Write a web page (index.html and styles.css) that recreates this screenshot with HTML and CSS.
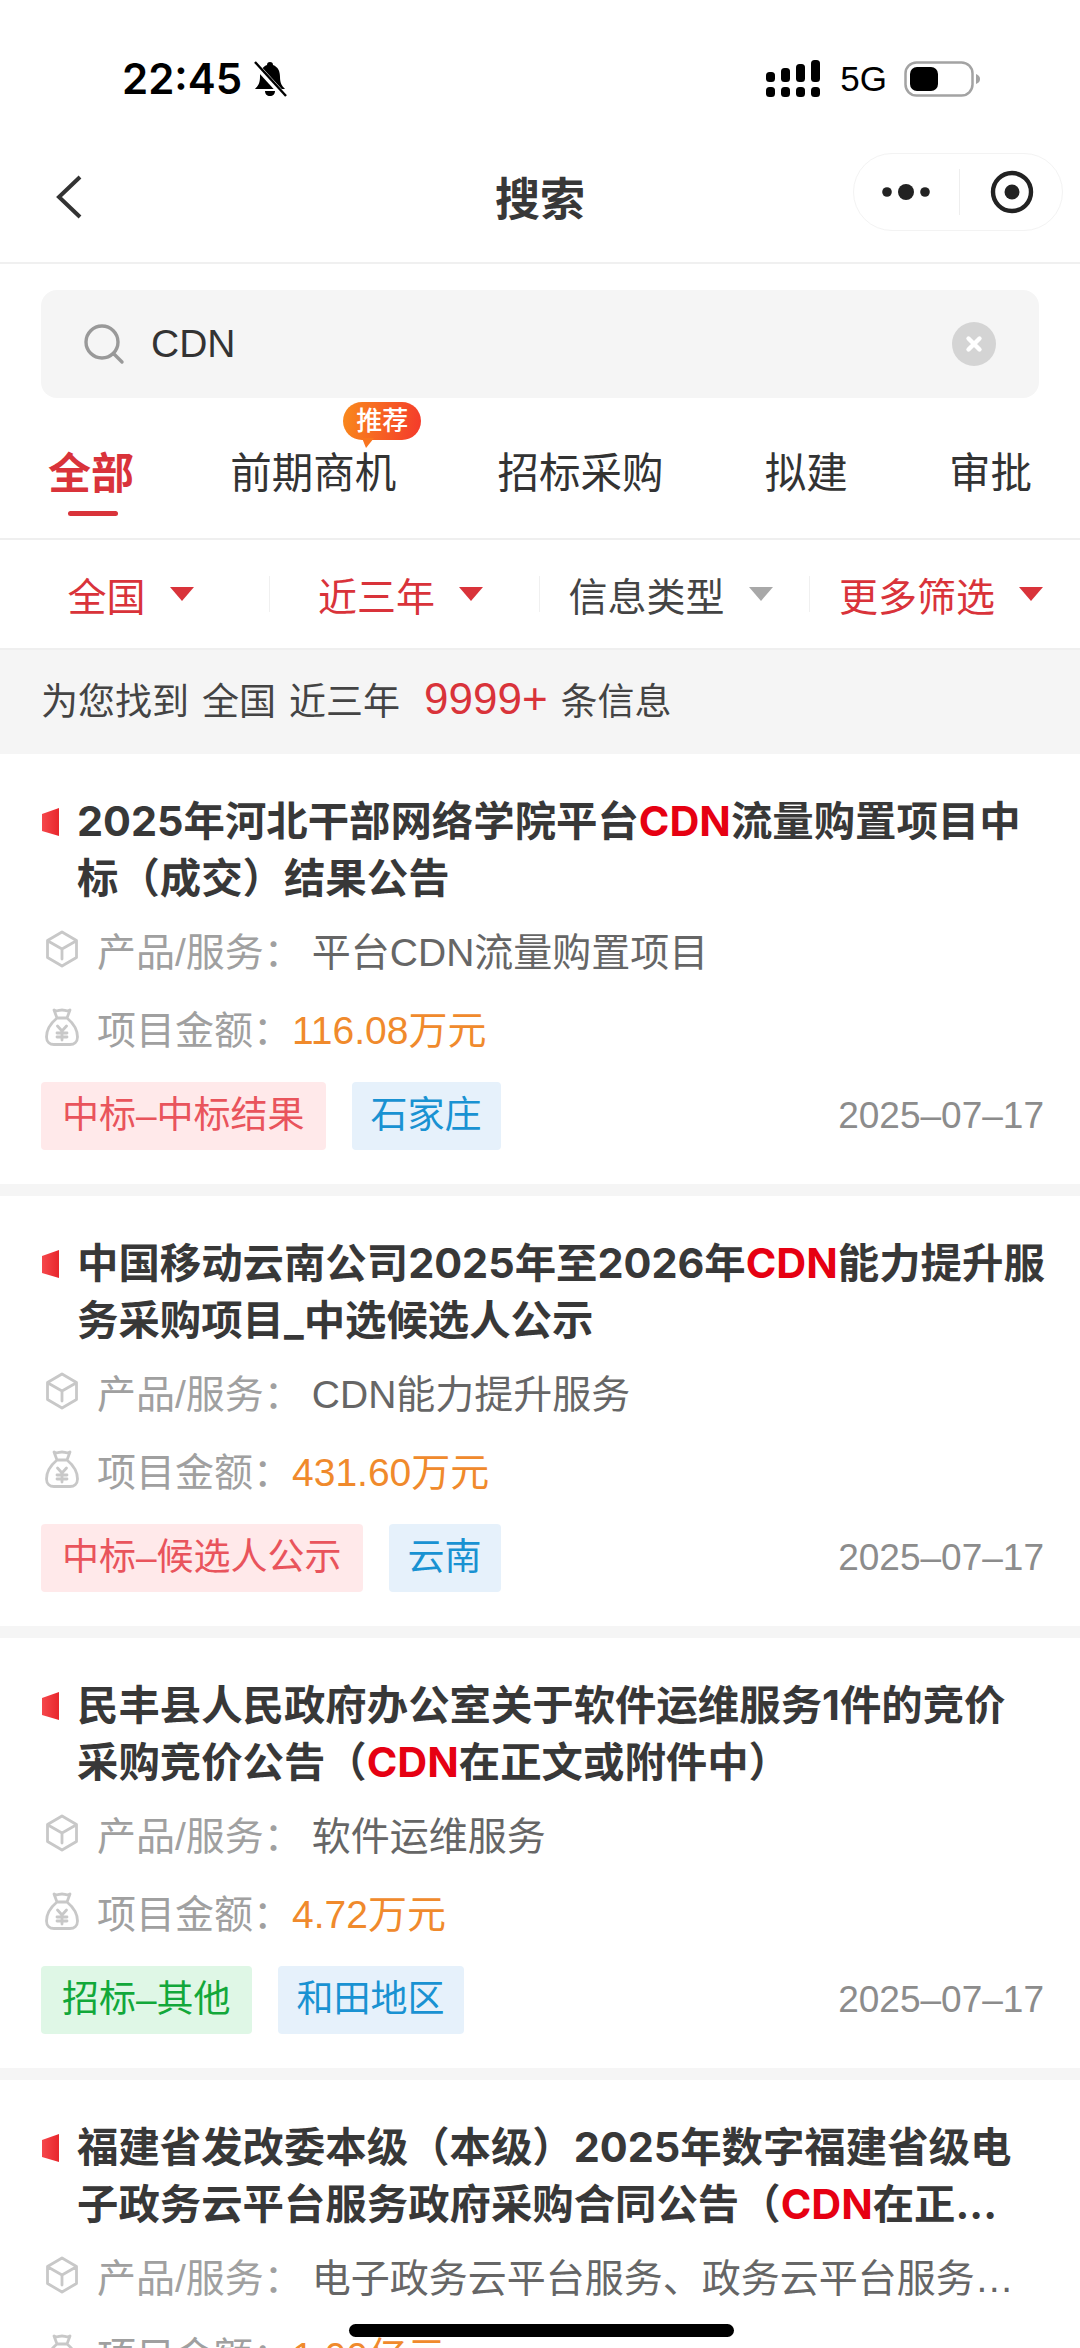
FILE: index.html
```html
<!DOCTYPE html>
<html lang="zh-CN">
<head>
  <meta charset="UTF-8" />
  <title>搜索</title>
  <link rel="stylesheet" href="styles.css">
</head>
<body>
  <svg class="defs" width="0" height="0">
    <defs>
      <linearGradient id="mark-fill" x1="0" y1="0" x2="1" y2="0">
        <stop offset="0" stop-color="#f5484c"/>
        <stop offset="1" stop-color="#e8262c"/>
      </linearGradient>
    </defs>
    <symbol id="icon-box" viewBox="0 0 34 38">
      <path d="M17 2 L31.5 10.5 V27.5 L17 36 L2.5 27.5 V10.5 Z M3 11 L17 19 L31 11 M17 19 V29" fill="none" stroke="#c8c8c8" stroke-width="2.8" stroke-linejoin="round" stroke-linecap="round"/>
    </symbol>
    <symbol id="icon-bag" viewBox="0 0 34 38">
      <path d="M9 2 C12 4 14 2 17 2 C20 2 22 4 25 2 L22 10 H12 Z M12 10 C6 15 1.5 22 1.5 29 C1.5 34 5 36.5 9 36.5 H25 C29 36.5 32.5 34 32.5 29 C32.5 22 28 15 22 10 M12.5 18 L17 23 L21.5 18 M17 23 V32 M12 25 H22 M12 29 H22" fill="none" stroke="#c8c8c8" stroke-width="2.8" stroke-linejoin="round" stroke-linecap="round"/>
    </symbol>
    <symbol id="icon-mark" viewBox="0 0 18 28">
      <path d="M18 0 V28 L1 23 V6 Z" fill="url(#mark-fill)"/>
    </symbol>
  </svg>

  <div class="page">
    <div class="statusbar">
      <div class="status-left">
        <span class="time">22:45</span>
        <svg class="bell-off" width="36" height="38" viewBox="0 0 36 38">
          <path d="M18 2 C20 2 21 3 21 5 C26 7 28 11 28 17 C28 23 30 26 33 29 H3 C6 26 8 23 8 17 C8 11 10 7 15 5 C15 3 16 2 18 2 Z M13 31 H23 C23 34 21 36 18 36 C15 36 13 34 13 31 Z" fill="#000"/>
          <path d="M2 3 L33 37" stroke="#fff" stroke-width="6"/>
          <path d="M3 2 L34 36" stroke="#000" stroke-width="2.4"/>
        </svg>
      </div>
      <div class="status-right">
        <svg class="signal" width="54" height="38" viewBox="0 0 54 38">
          <rect x="0" y="12" width="9" height="10" rx="3.5"/><rect x="15" y="8" width="9" height="14" rx="3.5"/><rect x="30" y="4" width="9" height="18" rx="3.5"/><rect x="45" y="0" width="9" height="22" rx="3.5"/>
          <rect x="0" y="27" width="9" height="10" rx="3.5"/><rect x="15" y="27" width="9" height="10" rx="3.5"/><rect x="30" y="27" width="9" height="10" rx="3.5"/><rect x="45" y="27" width="9" height="10" rx="3.5"/>
        </svg>
        <span class="net">5G</span>
        <svg class="battery" width="76" height="36" viewBox="0 0 76 36">
          <rect x="1.5" y="1.5" width="67" height="33" rx="11" fill="none" stroke="#a3a3a3" stroke-width="2.5"/>
          <rect x="6" y="6" width="28" height="24" rx="7" fill="#000"/>
          <path d="M72 13 C75 14 76 16 76 18 C76 20 75 22 72 23 Z" fill="#a3a3a3"/>
        </svg>
      </div>
    </div>

    <div class="navbar">
      <svg class="back" width="28" height="44" viewBox="0 0 28 44">
        <path d="M25 2 L4 22 L25 42" fill="none" stroke="#333" stroke-width="4"/>
      </svg>
      <h1 class="nav-title">搜索</h1>
      <div class="capsule">
        <svg width="48" height="20" viewBox="0 0 48 20"><circle cx="5" cy="10" r="4.8" fill="#222"/><circle cx="24" cy="10" r="8" fill="#222"/><circle cx="43" cy="10" r="4.8" fill="#222"/></svg>
        <span class="capsule-line"></span>
        <svg width="44" height="44" viewBox="0 0 44 44"><circle cx="22" cy="22" r="19" fill="none" stroke="#222" stroke-width="4.4"/><circle cx="22" cy="22" r="7.5" fill="#222"/></svg>
      </div>
    </div>

    <div class="searchwrap">
      <div class="searchbox">
        <svg width="42" height="42" viewBox="0 0 42 42"><circle cx="19" cy="19" r="16" fill="none" stroke="#999" stroke-width="3.4"/><path d="M31 31 L39 39" stroke="#999" stroke-width="3.4" stroke-linecap="round"/></svg>
        <span class="search-text">CDN</span>
        <svg class="clear" width="46" height="46" viewBox="0 0 46 46"><circle cx="23" cy="23" r="22" fill="#d4d4d4"/><path d="M17.5 17.5 L28.5 28.5 M28.5 17.5 L17.5 28.5" stroke="#fff" stroke-width="4.4" stroke-linecap="round"/></svg>
      </div>
    </div>

    <div class="tabs">
      <div class="tab active">全部</div>
      <div class="tab">前期商机
        <span class="badge">推荐</span>
      </div>
      <div class="tab">招标采购</div>
      <div class="tab">拟建</div>
      <div class="tab">审批</div>
    </div>

    <div class="filters">
      <div class="filter red">全国<i class="tri"></i></div>
      <div class="filter red">近三年<i class="tri"></i></div>
      <div class="filter">信息类型<i class="tri grey"></i></div>
      <div class="filter red">更多筛选<i class="tri"></i></div>
    </div>

    <div class="summary">
      <span>为您找到</span><span>全国</span><span>近三年</span><span class="count">9999+</span><span>条信息</span>
    </div>

    <div class="card">
      <div class="card-title"><svg class="mark"><use href="#icon-mark"/></svg><p>2025年河北干部网络学院平台<em>CDN</em>流量购置项目中标（成交）结果公告</p></div>
      <div class="row"><svg class="row-icon"><use href="#icon-box"/></svg><span class="label service">产品/服务：</span><span class="val">平台CDN流量购置项目</span></div>
      <div class="row"><svg class="row-icon"><use href="#icon-bag"/></svg><span class="label">项目金额：</span><span class="money">116.08万元</span></div>
      <div class="meta">
        <span class="tag pink">中标–中标结果</span><span class="tag blue">石家庄</span>
        <span class="date">2025–07–17</span>
      </div>
    </div>

    <div class="card">
      <div class="card-title"><svg class="mark"><use href="#icon-mark"/></svg><p>中国移动云南公司2025年至2026年<em>CDN</em>能力提升服务采购项目_中选候选人公示</p></div>
      <div class="row"><svg class="row-icon"><use href="#icon-box"/></svg><span class="label service">产品/服务：</span><span class="val">CDN能力提升服务</span></div>
      <div class="row"><svg class="row-icon"><use href="#icon-bag"/></svg><span class="label">项目金额：</span><span class="money">431.60万元</span></div>
      <div class="meta">
        <span class="tag pink">中标–候选人公示</span><span class="tag blue">云南</span>
        <span class="date">2025–07–17</span>
      </div>
    </div>

    <div class="card">
      <div class="card-title"><svg class="mark"><use href="#icon-mark"/></svg><p>民丰县人民政府办公室关于软件运维服务1件的竞价采购竞价公告（<em>CDN</em>在正文或附件中）</p></div>
      <div class="row"><svg class="row-icon"><use href="#icon-box"/></svg><span class="label service">产品/服务：</span><span class="val">软件运维服务</span></div>
      <div class="row"><svg class="row-icon"><use href="#icon-bag"/></svg><span class="label">项目金额：</span><span class="money">4.72万元</span></div>
      <div class="meta">
        <span class="tag green">招标–其他</span><span class="tag blue">和田地区</span>
        <span class="date">2025–07–17</span>
      </div>
    </div>

    <div class="card">
      <div class="card-title"><svg class="mark"><use href="#icon-mark"/></svg><p>福建省发改委本级（本级）2025年数字福建省级电子政务云平台服务政府采购合同公告（<em>CDN</em>在正...</p></div>
      <div class="row"><svg class="row-icon"><use href="#icon-box"/></svg><span class="label service">产品/服务：</span><span class="val">电子政务云平台服务、政务云平台服务…</span></div>
      <div class="row"><svg class="row-icon"><use href="#icon-bag"/></svg><span class="label">项目金额：</span><span class="money">1.00亿元</span></div>
    </div>

    <div class="home-bar"></div>
  </div>
</body>
</html>
```

FILE: styles.css
```css
* { box-sizing: border-box; }
html, body { margin: 0; padding: 0; background: #fff; }
body {
  font-family: "Liberation Sans", "Noto Sans CJK SC", sans-serif;
  color: #333;
}
.defs { position: absolute; }
.page {
  position: relative;
  width: 1080px;
  height: 2348px;
  overflow: hidden;
  background: #fff;
}

/* status bar */
.statusbar {
  height: 153px;
  padding: 60px 0 0 122px;
  display: flex;
  justify-content: space-between;
  align-items: flex-start;
}
.status-left { display: flex; align-items: center; height: 38px; color: #000; }
.time { font-family: Inter, "Liberation Sans", sans-serif; font-size: 42px; font-weight: 600; line-height: 38px; }
.bell-off { margin-left: 10px; }
.status-right { display: flex; align-items: center; height: 38px; margin-right: 100px; color: #000; }
.net { font-size: 35px; margin: 0 17px 0 20px; line-height: 38px; }

/* nav */
.navbar {
  height: 111px;
  border-bottom: 2px solid #f0f0f0;
  display: flex;
  justify-content: center;
  position: relative;
}
.back { position: absolute; left: 55px; top: 22px; }
.nav-title { margin: 0; font-size: 45px; font-weight: 700; line-height: 96px; color: #383838; }
.capsule {
  position: absolute;
  left: 853px;
  top: 0;
  width: 210px;
  height: 78px;
  border: 1px solid #f3f3f3;
  border-radius: 39px;
  display: flex;
  align-items: center;
  padding-left: 28px;
}
.capsule-line { width: 1px; height: 46px; background: #eee; margin: 0 30px 0 29px; }

/* search */
.searchwrap { padding: 26px 41px 0; }
.searchbox {
  height: 108px;
  background: #f5f5f5;
  border-radius: 16px;
  display: flex;
  align-items: center;
  padding: 0 42px 0 42px;
}
.search-text { font-size: 39px; margin-left: 26px; color: #333; flex: 1; }

/* tabs */
.tabs {
  height: 142px;
  padding: 12px 48px 0 48px;
  border-bottom: 2px solid #efefef;
  display: flex;
  justify-content: space-between;
  align-items: center;
}
.tab { position: relative; font-size: 41.5px; color: #333; line-height: 56px; }
.tab.active { color: #d9333a; font-weight: 700; font-size: 43px; margin-right: -5px; }
.tab.active::after {
  content: "";
  position: absolute;
  left: 20px;
  right: 16px;
  bottom: -14px;
  height: 5px;
  border-radius: 3px;
  background: #d9333a;
}
.badge {
  position: absolute;
  left: 113px;
  top: -44px;
  width: 78px;
  height: 38px;
  border-radius: 19px;
  background: linear-gradient(100deg, #f98a1c, #f4392b);
  color: #fff;
  font-size: 26px;
  font-weight: 500;
  line-height: 38px;
  text-align: center;
}
.badge::after {
  content: "";
  position: absolute;
  left: 19px;
  bottom: -8px;
  border-top: 10px solid #f8741f;
  border-left: 4px solid transparent;
  border-right: 8px solid transparent;
}

/* filters */
.filters {
  height: 110px;
  display: grid;
  grid-template-columns: repeat(4, 270px);
  align-items: center;
  border-bottom: 2px solid #efefef;
}
.filter {
  display: flex;
  align-items: center;
  justify-content: center;
  gap: 24px;
  height: 36px;
  padding-right: 8px;
  font-size: 39px;
  color: #444;
  border-right: 1px solid #f0f0f0;
}
.filter:last-child { border-right: 0; }
.filter.red { color: #d9333a; }
.tri {
  width: 0;
  height: 0;
  border-top: 14px solid #d9333a;
  border-left: 12px solid transparent;
  border-right: 12px solid transparent;
}
.tri.grey { border-top-color: #a8a8a8; }

/* summary */
.summary {
  height: 104px;
  background: #f5f5f5;
  padding: 0 41px 7px;
  display: flex;
  align-items: center;
  gap: 13px;
  font-size: 37px;
  color: #444;
}
.summary .count { color: #d9333a; font-size: 44px; margin-left: 11px; line-height: 40px; }

/* result cards */
.card {
  height: 442px;
  padding: 39px 34px 0 41px;
  border-bottom: 12px solid #f5f5f5;
}
.card-title { display: flex; align-items: flex-start; }
.mark { width: 18px; height: 28px; flex: none; margin: 15px 18px 0 0; }
.card-title p {
  margin: 0;
  font-family: Inter, "Noto Sans CJK SC", sans-serif;
  font-size: 41.4px;
  font-weight: 700;
  line-height: 57px;
  color: #383838;
  height: 114px;
  overflow: hidden;
}
.card-title em { font-style: normal; color: #e60012; }
.row {
  display: flex;
  align-items: center;
  height: 78px;
  font-size: 39px;
  color: #a0a0a0;
  white-space: nowrap;
}
.card-title + .row { margin-top: 3px; }
.row-icon { width: 34px; height: 38px; flex: none; margin: 0 18px 0 4px; }
.label.service { margin-right: 9px; }
.val { color: #666; }
.money { color: #f08a2c; }
.meta { display: flex; align-items: center; gap: 26px; margin-top: 16px; height: 68px; }
.tag {
  height: 68px;
  line-height: 68px;
  padding: 0 21px;
  font-size: 37px;
  border-radius: 4px;
}
.pink { background: #ffe9ea; color: #e9545c; }
.blue { background: #e6f1fb; color: #1992d2; padding: 0 19px; }
.green { background: #dff7e6; color: #12a83a; }
.date { margin-left: auto; font-size: 37px; color: #8c8c8c; margin-right: 2px; }

.home-bar {
  position: absolute;
  left: 349px;
  top: 2324px;
  width: 385px;
  height: 13px;
  border-radius: 7px;
  background: #000;
}
```
